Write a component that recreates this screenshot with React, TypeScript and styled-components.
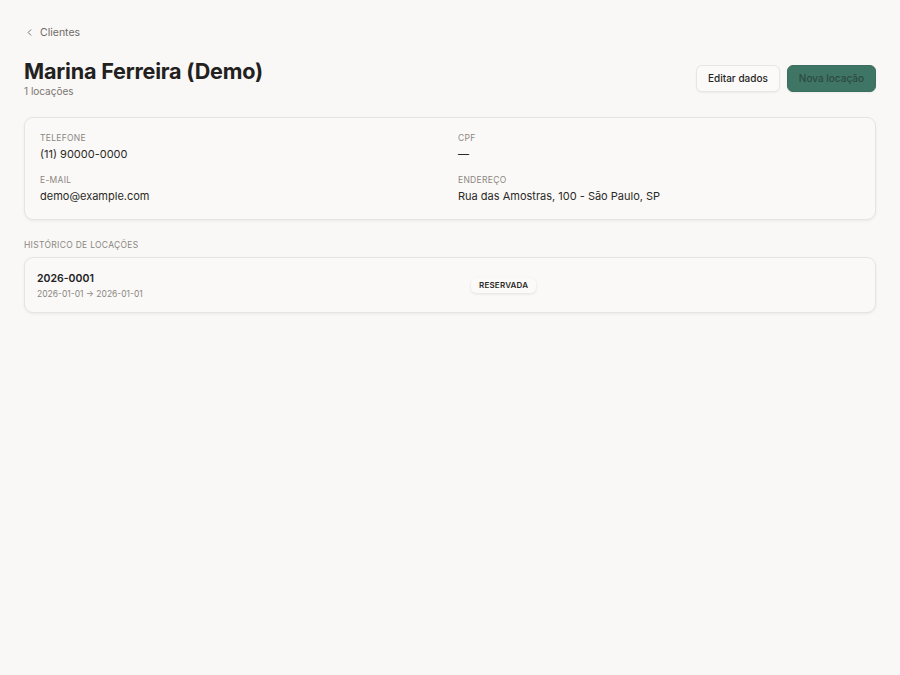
import React from "react";
import styled, { createGlobalStyle } from "styled-components";
import { ChevronLeft } from "lucide-react";

const GlobalStyle = createGlobalStyle`
  html, body {
    margin: 0;
    padding: 0;
    background: #f9f8f6;
  }
  body {
    font-family: Inter, "Noto Sans", sans-serif;
    color: #232220;
    -webkit-font-smoothing: antialiased;
  }
`;

const Page = styled.div`
  padding: 22px 24px;
  min-height: 675px;
  box-sizing: border-box;
`;

const BackLink = styled.a`
  display: inline-flex;
  align-items: center;
  gap: 5px;
  font-size: 10.5px;
  color: #6d6a66;
  text-decoration: none;
  cursor: pointer;
  margin-bottom: 16px;
  line-height: 16px;
`;

const Header = styled.div`
  display: flex;
  justify-content: space-between;
  align-items: flex-start;
  margin-bottom: 20px;
`;

const Title = styled.h1`
  margin: 0;
  font-size: 21.6px;
  font-weight: 700;
  line-height: 28px;
  letter-spacing: -0.2px;
  color: #222120;
`;

const Subtitle = styled.div`
  font-size: 10px;
  color: #7a7772;
  line-height: 12px;
`;

const Actions = styled.div`
  display: flex;
  gap: 7px;
  margin-top: 8px;
`;

const Button = styled.button<{ $primary?: boolean }>`
  height: 27px;
  padding: 0 11px;
  border-radius: 6px;
  font-family: inherit;
  font-size: 10px;
  font-weight: 500;
  cursor: pointer;
  border: 1px solid ${(p) => (p.$primary ? "#3c6f5f" : "#e8e6e2")};
  background: ${(p) => (p.$primary ? "#3f7565" : "#fbfaf9")};
  color: ${(p) => (p.$primary ? "#2c4a3f" : "#262522")};
  box-shadow: 0 1px 2px rgba(0, 0, 0, 0.05);
`;

const Card = styled.div`
  background: #faf9f7;
  border: 1px solid #e6e4e0;
  border-radius: 9px;
  box-shadow: 0 1px 3px rgba(0, 0, 0, 0.06);
`;

const InfoCard = styled(Card)`
  display: grid;
  grid-template-columns: 1fr 1fr;
  column-gap: 16px;
  row-gap: 12px;
  padding: 14px 15px 15px;
`;

const Field = styled.div`
  display: flex;
  flex-direction: column;
  gap: 3px;
`;

const Label = styled.div`
  font-size: 8.5px;
  letter-spacing: 0.3px;
  text-transform: uppercase;
  color: #8a8782;
  line-height: 12px;
`;

const Value = styled.div`
  font-size: 11px;
  color: #2a2926;
  line-height: 15px;
`;

const SectionTitle = styled(Label)`
  margin: 19px 0 6px;
`;

const RentalRow = styled(Card)`
  display: grid;
  grid-template-columns: 434px auto 1fr;
  align-items: center;
  padding: 13px 12px 12px;
`;

const RentalInfo = styled.div`
  display: flex;
  flex-direction: column;
  gap: 2px;
`;

const RentalCode = styled.div`
  font-size: 10.5px;
  font-weight: 600;
  line-height: 15px;
  color: #22211f;
`;

const RentalDates = styled.div`
  font-size: 8.5px;
  color: #8a8782;
  line-height: 12px;
`;

const Badge = styled.span`
  justify-self: start;
  display: inline-block;
  padding: 2px 8px;
  font-size: 8px;
  font-weight: 600;
  letter-spacing: 0.2px;
  text-transform: uppercase;
  color: #2a2926;
  background: #fbfaf9;
  border-radius: 5px;
  box-shadow: 0 1px 3px rgba(0, 0, 0, 0.1);
  line-height: 11px;
`;

const fields = [
  { label: "Telefone", value: "(11) 90000-0000" },
  { label: "CPF", value: "—" },
  { label: "E-mail", value: "demo@example.com" },
  { label: "Endereço", value: "Rua das Amostras, 100 - São Paulo, SP" },
];

export default function App() {
  return (
    <>
      <GlobalStyle />
      <Page>
        <BackLink>
          <ChevronLeft size={11} strokeWidth={2} />
          Clientes
        </BackLink>

        <Header>
          <div>
            <Title>Marina Ferreira (Demo)</Title>
            <Subtitle>1 locações</Subtitle>
          </div>
          <Actions>
            <Button>Editar dados</Button>
            <Button $primary>Nova locação</Button>
          </Actions>
        </Header>

        <InfoCard>
          {fields.map((f) => (
            <Field key={f.label}>
              <Label>{f.label}</Label>
              <Value>{f.value}</Value>
            </Field>
          ))}
        </InfoCard>

        <SectionTitle>Histórico de locações</SectionTitle>

        <RentalRow>
          <RentalInfo>
            <RentalCode>2026-0001</RentalCode>
            <RentalDates>2026-01-01 → 2026-01-01</RentalDates>
          </RentalInfo>
          <Badge>Reservada</Badge>
          <span />
        </RentalRow>
      </Page>
    </>
  );
}
